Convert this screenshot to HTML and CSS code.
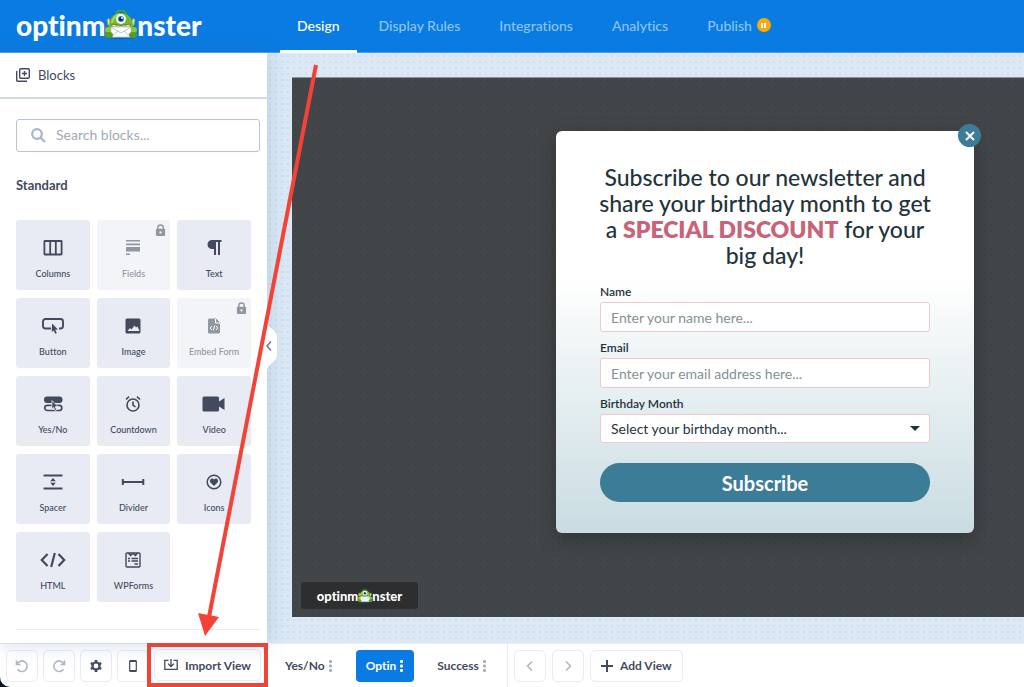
FILE: index.html
```
<!DOCTYPE html>
<html lang="en">
<head>
  <meta charset="UTF-8">
  <meta name="viewport" content="width=device-width, initial-scale=1.0">
  <title>OptinMonster Builder</title>
  <link rel="stylesheet" href="styles.css">
</head>
<body>
  <svg class="defs" aria-hidden="true">
    <symbol id="monster" viewBox="0 0 34 30">
      <ellipse cx="17" cy="27" rx="15" ry="2" fill="#0563b5"/>
      <path d="M12 4c1-5 9-5 10 0" fill="none" stroke="#5fa51c" stroke-width="1.5"/>
      <path d="M5 8L3 10l1 5 3 1M29 8l2 2-1 5-3 1" fill="#e8dca0" stroke="#a89a4a"/>
      <path d="M5 17C5 8 10 3 17 3s12 5 12 14l1 9H4z" fill="#76b82a"/>
      <path d="M8 13c1-5 4-8 8-9" fill="none" stroke="#a5da4c" stroke-width="2"/>
      <circle cx="17" cy="9" r="5" fill="#fff"/>
      <circle cx="17" cy="9" r="3" fill="#1b8ac9"/>
      <circle cx="17" cy="9" r="2" fill="#10263c"/>
      <circle cx="18" cy="8" r="1" fill="#fff"/>
      <path d="M8 14q9 3 18 0v3H8z" fill="#f8edc0" stroke="#64831f"/>
      <path d="M12 15v2M15 15v2M19 15v2M22 15v2" stroke="#9aa558"/>
      <rect x="7" y="17" width="20" height="10" rx="1" fill="#fff" stroke="#c7d5df"/>
      <path d="M7 17l10 6 10-6M7 27l7-6M27 27l-7-6" fill="none" stroke="#b5c7d3"/>
      <circle cx="4" cy="20" r="3" fill="#8bca33"/>
      <circle cx="30" cy="20" r="3" fill="#8bca33"/>
      <ellipse cx="5" cy="25" rx="4" ry="3" fill="#5c9b20"/>
      <ellipse cx="29" cy="25" rx="4" ry="3" fill="#5c9b20"/>
    </symbol>
    <symbol id="lock" viewBox="0 0 12 14">
      <path d="M3 6V4a3 3 0 0 1 6 0v2" fill="none" stroke="currentColor" stroke-width="1.5"/>
      <path fill-rule="evenodd" d="M2 5h8a1 1 0 0 1 1 1v6a1 1 0 0 1-1 1H2a1 1 0 0 1-1-1V6a1 1 0 0 1 1-1zm4 2.700a1.300 1.300 0 1 0 0 2.600 1.300 1.300 0 0 0 0-2.600z" fill="currentColor"/>
    </symbol>
    <symbol id="dots" viewBox="0 0 4 12">
      <rect x="0" y="0" width="3" height="3" rx="1" fill="currentColor"/>
      <rect x="0" y="4.500" width="3" height="3" rx="1" fill="currentColor"/>
      <rect x="0" y="9" width="3" height="3" rx="1" fill="currentColor"/>
    </symbol>
  </svg>

  <div class="app">
    <header class="topbar">
      <a class="logo" href="#" aria-label="optinmonster"><span>optinm</span><svg><use href="#monster"/></svg><span>nster</span></a>
      <nav class="tabs">
        <a class="active" href="#">Design</a>
        <a href="#">Display Rules</a>
        <a href="#">Integrations</a>
        <a href="#">Analytics</a>
        <a href="#">Publish <span class="paused"></span></a>
      </nav>
    </header>

    <div class="main">
      <aside class="sidebar">
        <div class="sidebar-title">
          <svg width="14" height="14" viewBox="0 0 14 14" fill="none" stroke="currentColor" stroke-width="1.400"><rect x="3.700" y=".7" width="9.600" height="9.600" rx="1"/><path d="M.7 3v9.300a1 1 0 0 0 1 1H11M8.500 3v5M6 5.500h5"/></svg>
          Blocks
        </div>
        <div class="sidebar-body">
          <label class="search">
            <svg width="15" height="15" viewBox="0 0 15 15" fill="none" stroke="currentColor" stroke-width="2.200"><circle cx="6" cy="6" r="4.800"/><path d="M9.500 9.500l4.500 4.500"/></svg>
            <input type="text" placeholder="Search blocks..." aria-label="Search blocks">
          </label>
          <h2>Standard</h2>
          <div class="blocks">
            <button class="block" type="button">
              <svg viewBox="0 0 26 20" fill="none" stroke="currentColor" stroke-width="1.800"><rect x="4.400" y="3" width="17.200" height="13.500" rx=".5"/><path d="M10.200 3v13.500M15.800 3v13.500"/></svg>
              Columns
            </button>
            <button class="block locked" type="button" disabled>
              <svg viewBox="0 0 26 20" fill="currentColor"><path d="M6 2h14v1.600H6zM6 5.600h14v1.600H6zM6 9h14v4.500H6zM6 15.500h4v1.500H6z"/></svg>
              Fields
              <svg class="lock"><use href="#lock"/></svg>
            </button>
            <button class="block" type="button">
              <svg viewBox="0 0 26 20" fill="currentColor"><path d="M11 2h9.500v2H19v13h-2V4h-2v13h-2v-6h-2a4.500 4.500 0 0 1 0-9z"/></svg>
              Text
            </button>
            <button class="block" type="button">
              <svg viewBox="0 0 26 20"><path d="M11 12.500H5.500a2.500 2.500 0 0 1-2.500-2.500V5.500A2.500 2.500 0 0 1 5.500 3h15A2.500 2.500 0 0 1 23 5.500V10a2.500 2.500 0 0 1-2.500 2.500H19" fill="none" stroke="currentColor" stroke-width="1.900"/><path d="M12 7.500l6 6-2.800.2 1.600 3.300-1.600.8-1.500-3.400-1.900 1.600z" fill="currentColor"/></svg>
              Button
            </button>
            <button class="block" type="button">
              <svg viewBox="0 0 26 20"><rect x="5.500" y="2.500" width="15" height="15" rx="1.500" fill="currentColor"/><path d="M7.500 15l2.500-3 1.500 1.500 3-4 1.500 2 1.500-1 2 4.500z" fill="#e8ebf3"/></svg>
              Image
            </button>
            <button class="block locked" type="button" disabled>
              <svg viewBox="0 0 26 20"><path d="M8.500 2.500H15l4 4V16a1.500 1.500 0 0 1-1.500 1.500h-9A1.500 1.500 0 0 1 7 16V4a1.500 1.500 0 0 1 1.500-1.500z" fill="currentColor"/><path d="M14.500 3v4H19M11 10l-2 2 2 2M15 10l2 2-2 2M13.800 9.500l-1.600 5" fill="none" stroke="#fff" stroke-width="1"/></svg>
              Embed Form
              <svg class="lock"><use href="#lock"/></svg>
            </button>
            <button class="block" type="button">
              <svg viewBox="0 0 26 20"><rect x="4" y="2.500" width="18.500" height="6.500" rx="3" fill="currentColor"/><rect x="4.800" y="11.300" width="17" height="5.200" rx="2.500" fill="none" stroke="currentColor" stroke-width="1.700"/><path d="M12 6.500l6 6-2.800.2 1.500 3.200-1.600.8-1.500-3.300-1.900 1.500z" fill="currentColor" stroke="#e8ebf3" stroke-width=".8"/></svg>
              Yes/No
            </button>
            <button class="block" type="button">
              <svg viewBox="0 0 26 20" fill="none" stroke="currentColor" stroke-width="1.600"><circle cx="13" cy="11" r="6"/><path d="M13 7.500V11l2.500 2M6 5.500l3-2.800M20 5.500l-3-2.800"/></svg>
              Countdown
            </button>
            <button class="block" type="button">
              <svg viewBox="0 0 26 20" fill="currentColor"><path d="M3 2.500h13.500a1.500 1.500 0 0 1 1.500 1.500v3.500l5.500-3.500v12L18 12.500V16a1.500 1.500 0 0 1-1.500 1.500H3A1.500 1.500 0 0 1 1.500 16V4A1.500 1.500 0 0 1 3 2.500z"/></svg>
              Video
            </button>
            <button class="block" type="button">
              <svg viewBox="0 0 26 20" fill="currentColor"><path d="M3.500 2.500h19v2h-19zM3.500 15.500h19v2h-19zM13 6l2.800 3.300h-5.600zM13 14l2.800-3.300h-5.600z"/></svg>
              Spacer
            </button>
            <button class="block" type="button">
              <svg viewBox="0 0 26 20" fill="currentColor"><path d="M1.800 7h2v2h18.500V7h2v6h-2v-2H3.800v2h-2z"/></svg>
              Divider
            </button>
            <button class="block" type="button">
              <svg viewBox="0 0 26 20"><circle cx="13" cy="10" r="6.800" fill="none" stroke="currentColor" stroke-width="1.500"/><path d="M13 14L9.500 10.500C7.500 8 11 5 13 7.500c2-2.500 5.500.5 3.500 3z" fill="currentColor"/></svg>
              Icons
            </button>
            <button class="block" type="button">
              <svg viewBox="0 0 26 20" fill="none" stroke="currentColor" stroke-width="2.200"><path d="M7.500 4L1.800 10l5.700 6M18.500 4l5.700 6-5.700 6M14.800 3l-3.600 14"/></svg>
              HTML
            </button>
            <button class="block" type="button">
              <svg viewBox="0 0 26 20" fill="none" stroke="currentColor" stroke-width="1.400"><rect x="6" y="3" width="14" height="14" rx="1"/><path d="M8.500 3l2 2.500L13 3.500l2.500 2 2-2.500M8 8.500h2M11.500 8.500H18M8 11h2M11.500 11H18M14.500 14H18"/></svg>
              WPForms
            </button>
          </div>
          <hr>
        </div>
        <button class="collapse" type="button" aria-label="Collapse sidebar">
          <svg width="14" height="48" viewBox="0 0 14 48"><path d="M0 0h1c1 7 10 7 10 16v16c0 9-9 9-10 16H0z" fill="#fff"/><path d="M5 19.500L1 24l4 4.500" fill="none" stroke="#6d778c" stroke-width="1.500"/></svg>
        </button>
      </aside>

      <main class="canvas">
        <section class="preview">
          <form class="popup">
            <button class="close" type="button" aria-label="Close">
              <svg width="10" height="10" viewBox="0 0 10 10" stroke="#fff" stroke-width="2"><path d="M1 1l8 8M9 1L1 9"/></svg>
            </button>
            <h1>Subscribe to our newsletter and<br>share your birthday month to get<br>a <strong>SPECIAL DISCOUNT</strong> for your<br>big day!</h1>
            <label for="name">Name</label>
            <input id="name" type="text" placeholder="Enter your name here...">
            <label for="email">Email</label>
            <input id="email" type="email" placeholder="Enter your email address here...">
            <label for="month">Birthday Month</label>
            <div class="select">
              <select id="month">
                <option>Select your birthday month...</option>
              </select>
            </div>
            <button class="subscribe" type="submit">Subscribe</button>
          </form>
          <a class="badge logo" href="#" aria-label="optinmonster"><span>optinm</span><svg><use href="#monster"/></svg><span>nster</span></a>
        </section>
      </main>
    </div>

    <footer class="bottombar">
      <div class="tools">
        <button class="btn faded" type="button" aria-label="Undo">
          <svg width="14" height="14" viewBox="0 0 14 14" fill="none" stroke="currentColor" stroke-width="1.600"><path d="M1.500 1.500V5.500h4M2 5.200a5.300 5.300 0 1 1 .5 5"/></svg>
        </button>
        <button class="btn faded" type="button" aria-label="Redo">
          <svg width="14" height="14" viewBox="0 0 14 14" fill="none" stroke="currentColor" stroke-width="1.600"><path d="M12.500 1.500V5.500h-4M12 5.200a5.300 5.300 0 1 0-.5 5"/></svg>
        </button>
        <button class="btn" type="button" aria-label="Settings">
          <svg width="14" height="14" viewBox="0 0 14 14" fill="none" stroke="currentColor"><circle cx="7" cy="7" r="3.500" stroke-width="2.200"/><path d="M7 1v2M7 11v2M1.800 4l1.700 1M10.500 9l1.700 1M1.800 10l1.700-1M10.500 5l1.700-1" stroke-width="2.600"/></svg>
        </button>
        <button class="btn" type="button" aria-label="Mobile view">
          <svg width="14" height="14" viewBox="0 0 14 14"><rect x="3.700" y="1.700" width="6.600" height="10.600" rx="1" fill="none" stroke="currentColor" stroke-width="1.200"/><path d="M3.500 1.500h7v1.500h-7zM3.500 11h7v1.500h-7z" fill="currentColor"/></svg>
        </button>
        <div class="highlight">
          <button class="btn" type="button">
            <svg width="14" height="12" viewBox="0 0 14 12" fill="none" stroke="currentColor" stroke-width="1.300"><path d="M4.500 1.300H.8v9h12.400v-9H9.500M7 0v7M4.200 4.800L7 7.600l2.800-2.800"/></svg>
            Import View
          </button>
        </div>
      </div>
      <div class="views">
        <button class="view" type="button">Yes/No <svg><use href="#dots"/></svg></button>
        <button class="view current" type="button">Optin <svg><use href="#dots"/></svg></button>
        <button class="view" type="button">Success <svg><use href="#dots"/></svg></button>
      </div>
      <div class="pager">
        <button class="btn faded" type="button" aria-label="Previous view">
          <svg width="14" height="14" viewBox="0 0 14 14" fill="none" stroke="currentColor" stroke-width="1.600"><path d="M9 2.500L4.500 7 9 11.500"/></svg>
        </button>
        <button class="btn faded" type="button" aria-label="Next view">
          <svg width="14" height="14" viewBox="0 0 14 14" fill="none" stroke="currentColor" stroke-width="1.600"><path d="M5 2.500L9.500 7 5 11.500"/></svg>
        </button>
        <button class="btn add" type="button">
          <svg width="12" height="12" viewBox="0 0 12 12" stroke="currentColor" stroke-width="2"><path d="M6 0v12M0 6h12"/></svg>
          Add View
        </button>
      </div>
    </footer>

    <svg class="arrow" width="330" height="640" viewBox="0 0 330 640" aria-hidden="true">
      <path d="M316 65L209 617" stroke="#f44336" stroke-width="4"/>
      <path d="M198 613l21 4-14 19z" fill="#f44336"/>
    </svg>
  </div>
</body>
</html>
```
FILE: styles.css
```
* {
  box-sizing: border-box;
}
body {
  margin: 0;
  background-color: #0c1420;
  font-family: Lato, sans-serif;
  font-size: 13px;
  font-variant-ligatures: none;
  color: #434a5e;
}
button, input, select {
  font: inherit;
  color: inherit;
}
button {
  padding: 0;
  border: 0;
  background: none;
}
a {
  text-decoration: none;
}
.defs {
  display: none;
}
.app {
  position: relative;
  display: flex;
  flex-direction: column;
  height: 100vh;
  overflow: hidden;
  border-bottom-left-radius: 10px;
  background-color: #fff;
}

/* top bar */
.topbar {
  display: flex;
  flex: none;
  height: 53px;
  background-color: #0a7be2;
  border-bottom: 1px solid #4ea0ea;
}
.logo {
  display: flex;
  align-items: center;
  color: #fff;
  font-weight: 900;
}
.topbar .logo {
  width: 280px;
  padding: 0 0 2px 16px;
  font-size: 28px;
}
.topbar .logo svg {
  width: 34px;
  height: 30px;
  margin: 0 -1px;
}
.tabs {
  display: flex;
  gap: 5px;
  margin-bottom: -1px;
  font-size: 14px;
  font-weight: 500;
}
.tabs a {
  display: flex;
  align-items: center;
  gap: 5px;
  padding: 0 17px;
  border-bottom: 3px solid transparent;
  color: #8fc3f5;
}
.tabs .active {
  border-color: #fff;
  color: #fff;
}
.paused {
  display: flex;
  align-items: center;
  justify-content: center;
  gap: 1px;
  width: 14px;
  height: 14px;
  border-radius: 50%;
  background-color: #ffa800;
}
.paused::before, .paused::after {
  content: "";
  width: 2px;
  height: 5px;
  background-color: #fff;
}

.main {
  display: flex;
  flex: 1;
  min-height: 0;
}

/* sidebar */
.sidebar {
  position: relative;
  z-index: 1;
  flex: none;
  width: 267px;
  background-color: #fff;
  box-shadow: 0 0 20px rgba(60, 110, 160, 0.25);
}
.sidebar-title {
  display: flex;
  align-items: center;
  gap: 8px;
  height: 46px;
  padding-left: 16px;
  border-bottom: 2px solid #d3d9e6;
}
.sidebar-body {
  padding: 20px 7px 0 16px;
}
.search {
  display: flex;
  align-items: center;
  gap: 10px;
  height: 33px;
  padding-left: 14px;
  border: 1px solid #b9c3d8;
  border-radius: 3px;
  color: #a5b4d2;
}
.search input {
  flex: 1;
  min-width: 0;
  padding: 0 0 2px;
  border: 0;
  outline: 0;
  font-size: 14px;
}
.search input::placeholder {
  color: #a4a9b3;
}
.sidebar h2 {
  margin: 24px 0 26px;
  font-size: 13px;
  line-height: 18px;
}
.blocks {
  display: grid;
  grid-template-columns: repeat(3, 1fr);
  gap: 8px 7px;
  margin-right: 9px;
}
.block {
  position: relative;
  display: flex;
  flex-direction: column;
  align-items: center;
  gap: 10px;
  height: 70px;
  padding-top: 18px;
  border-radius: 3px;
  background-color: #e8ebf3;
  font-size: 9px;
  font-weight: 500;
}
.block svg {
  width: 26px;
  height: 20px;
}
.locked {
  background-color: #f3f4f8;
  color: #9196a3;
}
.block .lock {
  position: absolute;
  top: 4px;
  right: 4px;
  width: 11px;
  height: 13px;
}
.sidebar hr {
  margin: 27px 0 0;
  border: 0;
  border-top: 1px solid #e8ebf3;
}
.collapse {
  position: absolute;
  top: 269px;
  left: 100%;
  margin-left: -1px;
}
.collapse svg {
  display: block;
}

/* canvas and popup */
.canvas {
  flex: 1;
  min-width: 0;
  padding: 24px 0 26px 25px;
  background: radial-gradient(circle at center, #cbdff3 1px, transparent 1px) 0 0 / 6px 6px #dce9f5;
}
.preview {
  position: relative;
  display: flex;
  align-items: flex-start;
  justify-content: flex-end;
  height: 100%;
  padding: 53px 50px 0 0;
  border-top: 1px solid #8693a1;
  background: radial-gradient(circle at center, #3f4346 1px, transparent 1px) 0 0 / 6px 6px #424649;
}
.popup {
  position: relative;
  width: 418px;
  padding: 33px 44px 31px;
  border-radius: 6px;
  background: linear-gradient(#fff 36%, #c9dce2);
  box-shadow: 0 6px 20px rgba(0, 0, 0, 0.25);
  color: #1f343b;
}
.popup h1 {
  margin: 0 -10px 16px;
  font-size: 23px;
  font-weight: 500;
  line-height: 26px;
  text-align: center;
}
.popup h1 strong {
  font-weight: 800;
  color: #ca6377;
}
.popup label {
  display: block;
  margin-bottom: 2px;
  font-size: 12px;
  font-weight: 600;
  line-height: 16px;
}
.popup input, .popup select {
  display: block;
  width: 100%;
  height: 30px;
  padding: 0 10px;
  border: 1px solid #efc7cf;
  border-radius: 3px;
  background-color: #fff;
  font-size: 14px;
}
.popup input {
  margin-bottom: 8px;
}
.popup input::placeholder {
  color: #859095;
}
.popup select {
  appearance: none;
  height: 29px;
}
.select {
  position: relative;
}
.select::after {
  content: "";
  position: absolute;
  top: 12px;
  right: 10px;
  border: 5px solid transparent;
  border-top-color: #1f343b;
  border-bottom: 0;
}
.subscribe {
  width: 100%;
  height: 39px;
  margin-top: 20px;
  border-radius: 20px;
  background-color: #3d7c96;
  color: #fff;
  font-size: 20px;
  font-weight: 700;
}
.close {
  position: absolute;
  top: -7px;
  right: -7px;
  display: flex;
  align-items: center;
  justify-content: center;
  width: 23px;
  height: 23px;
  border-radius: 50%;
  background-color: #3d7c96;
}
.badge {
  position: absolute;
  bottom: 8px;
  left: 9px;
  justify-content: center;
  width: 117px;
  height: 27px;
  border-radius: 3px;
  background-color: #2c2e30;
  font-size: 13px;
}
.badge svg {
  width: 16px;
  height: 14px;
  margin: 0 -1px;
}

/* bottom bar */
.bottombar {
  display: flex;
  flex: none;
  height: 44px;
  border-top: 1px solid #edeff5;
  font-weight: 700;
  font-size: 12px;
}
.tools {
  display: flex;
  align-items: center;
  gap: 5px;
  width: 267px;
  padding-left: 6px;
}
.btn {
  display: flex;
  align-items: center;
  justify-content: center;
  gap: 7px;
  flex: none;
  min-width: 32px;
  height: 32px;
  border: 1px solid #e8ebf3;
  border-radius: 5px;
  background-color: #fff;
}
.faded {
  color: #b3b7c1;
}
.highlight {
  display: flex;
  align-items: center;
  flex: none;
  height: 44px;
  margin: -1px 0 0 -7px;
  border: 4px solid #f44336;
  background-color: #fff;
  position: relative;
}
.highlight .btn {
  width: 107px;
  margin: 0 3px;
}
.views {
  display: flex;
  align-items: center;
  gap: 8px;
  width: 241px;
  padding-left: 8px;
  border-right: 1px solid #e8ebf3;
}
.view {
  display: flex;
  align-items: center;
  gap: 4px;
  height: 32px;
  padding: 0 10px;
  border-radius: 4px;
}
.view svg {
  width: 4px;
  height: 12px;
  color: #a9aebb;
}
.current {
  margin: 0 5px;
  background-color: #0a7be2;
  color: #fff;
}
.current svg {
  color: #fff;
}
.pager {
  display: flex;
  align-items: center;
  gap: 6px;
  padding-left: 6px;
}
.add {
  padding: 0 10px;
}

/* pointer from the Design tab to Import View */
.arrow {
  position: absolute;
  top: 0;
  left: 0;
  z-index: 2;
  pointer-events: none;
}
```
